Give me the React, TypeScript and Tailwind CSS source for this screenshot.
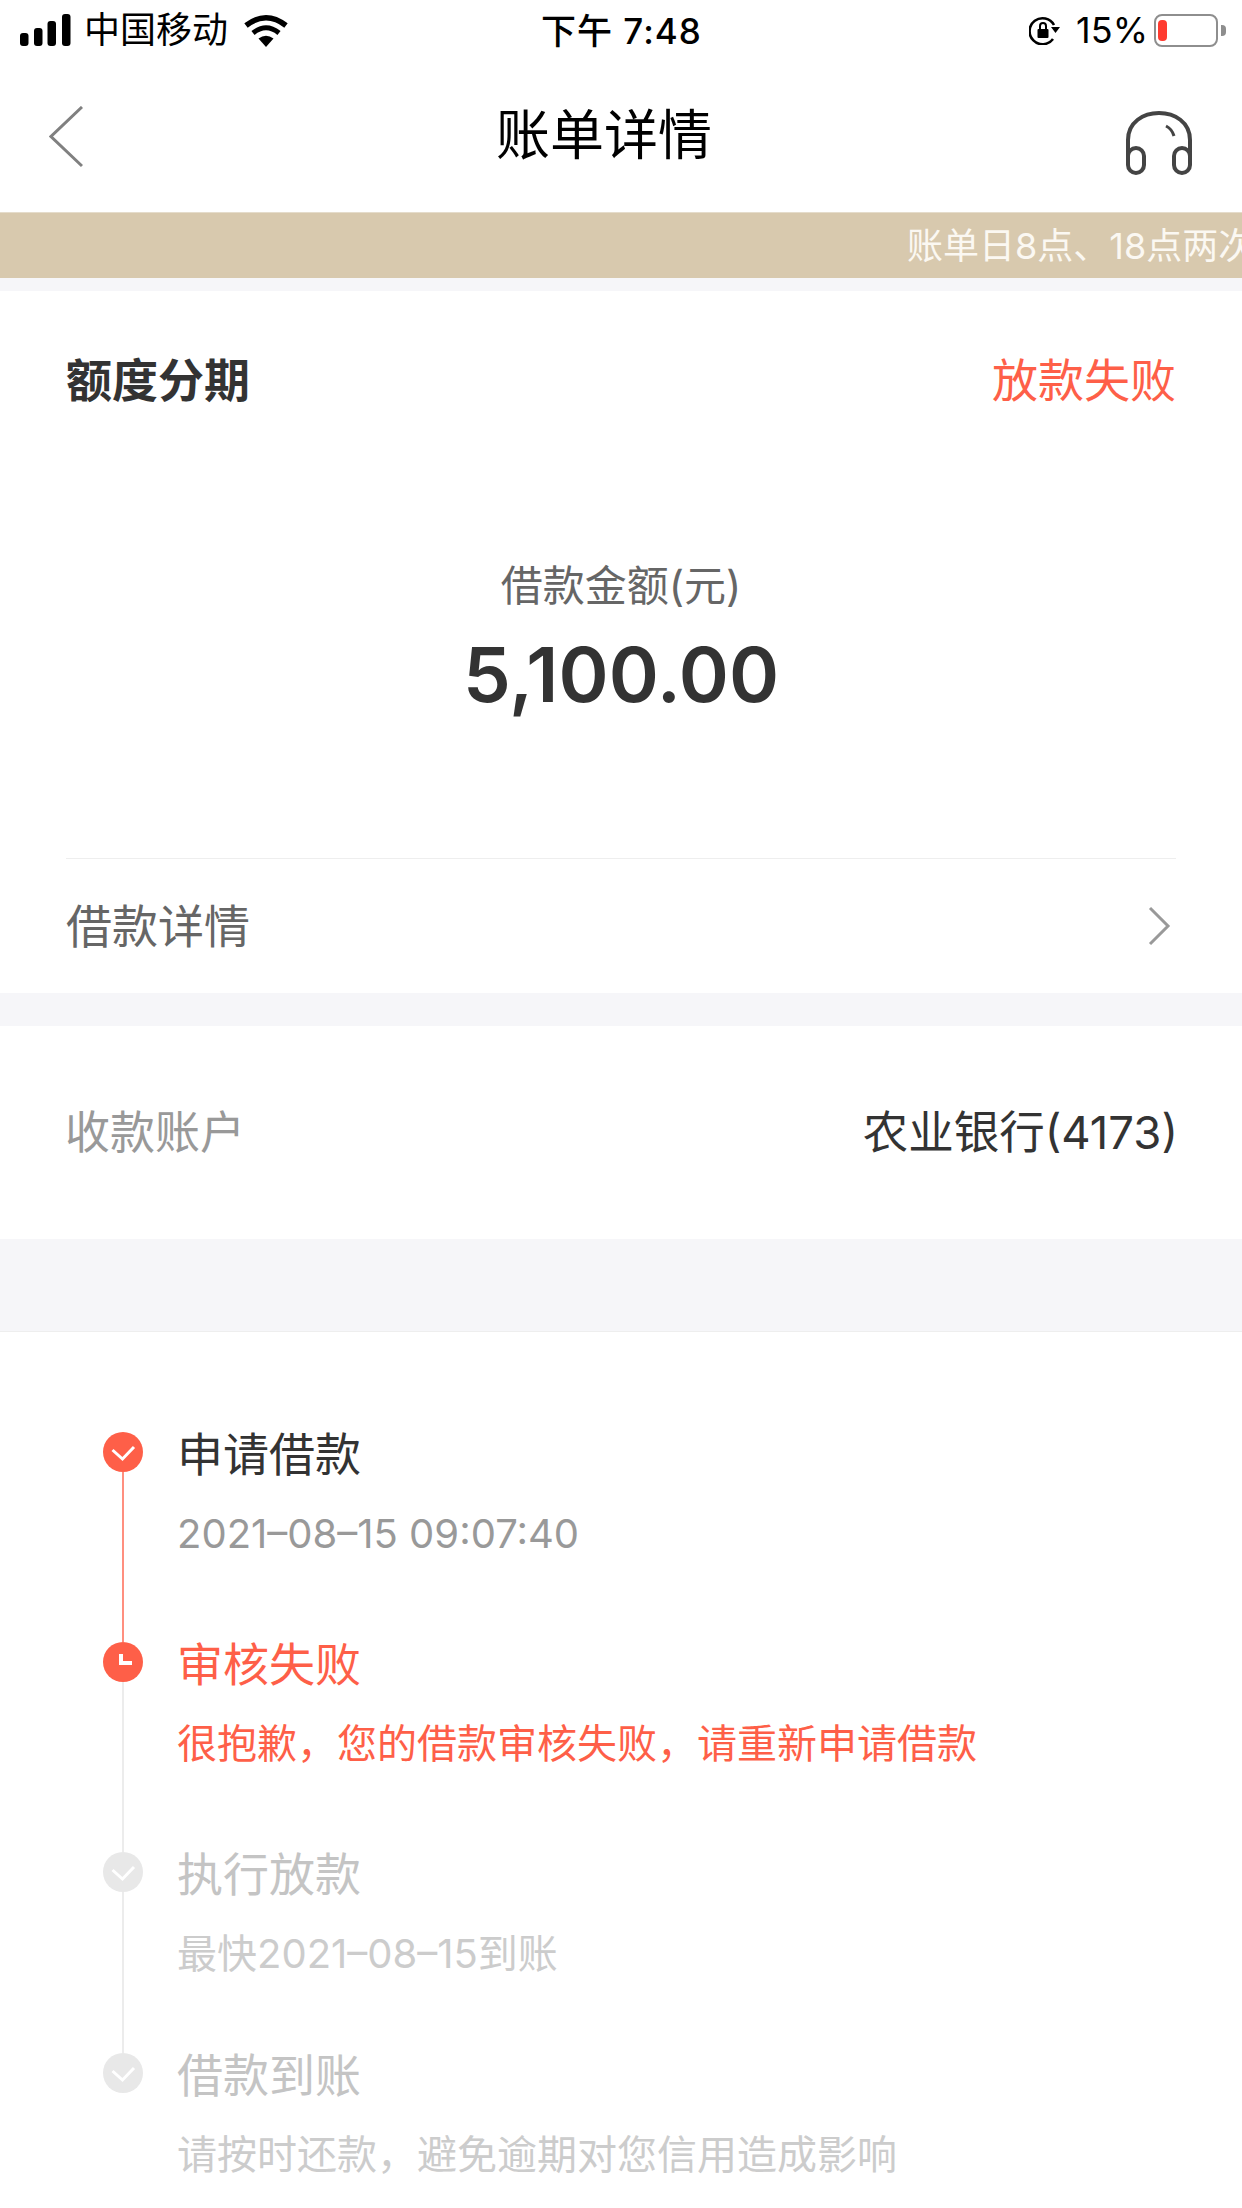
import React from "react";

const font = { fontFamily: '"Inter","Noto Sans CJK SC",sans-serif' };

function Check({ fill, mark }: { fill: string; mark: string }) {
  return (
    <svg width="40" height="40" viewBox="0 0 40 40" className="block shrink-0">
      <circle cx="20" cy="20" r="20" fill={fill} />
      <path d="M9.5 18 L19.5 27 L31 15" fill="none" stroke={mark} strokeWidth="3" />
    </svg>
  );
}

function Clock() {
  return (
    <svg width="40" height="40" viewBox="0 0 40 40" className="block shrink-0">
      <circle cx="20" cy="20" r="20" fill="#fe5f48" />
      <path d="M18 12 V21 H29" fill="none" stroke="#fff" strokeWidth="4" />
    </svg>
  );
}

function Step({
  icon, title, sub, titleCls, subCls, lineCls, h,
}: {
  icon: React.ReactNode; title: string; sub: string; titleCls: string; subCls: string; lineCls?: string; h: string;
}) {
  return (
    <div className={`flex ${h}`}>
      <div className="flex w-[177px] shrink-0 flex-col items-center pl-[103px] pr-[34px]">
        {icon}
        {lineCls && <div className={`w-[2px] grow ${lineCls}`} />}
      </div>
      <div className="flex min-w-0 flex-col">
        <div className={`h-[40px] whitespace-nowrap text-[46px] leading-[45px] ${titleCls}`}>{title}</div>
        <div className={`mt-[41px] whitespace-nowrap text-[40px] leading-[42px] ${subCls}`}>{sub}</div>
      </div>
    </div>
  );
}

export default function App() {
  return (
    <div style={font} className="flex h-[2208px] w-[1242px] flex-col overflow-hidden bg-white">
      {/* status bar */}
      <div className="relative flex h-[60px] shrink-0 items-center justify-between pl-[20px] pr-[16px] text-black">
        <div className="flex items-center">
          <svg width="51" height="32" viewBox="0 0 51 32" className="block">
            <rect x="0" y="19" width="8.5" height="13" rx="3" />
            <rect x="14" y="14" width="8.5" height="18" rx="3" />
            <rect x="27.5" y="7" width="8.5" height="25" rx="3" />
            <rect x="42" y="0" width="8.5" height="32" rx="3" />
          </svg>
          <span className="ml-[13px] text-[36px] leading-[40px]">中国移动</span>
          <svg width="46" height="33" viewBox="0 0 46 33" className="ml-[15px] block">
            <path d="M23 33 L15.5 24.5 Q23 19 30.5 24.5 Z" />
            <path d="M10 19 Q23 8.5 36 19" fill="none" stroke="#000" strokeWidth="5" />
            <path d="M3 11.5 Q23 -4 43 11.5" fill="none" stroke="#000" strokeWidth="5.5" />
          </svg>
        </div>
        <div className="absolute left-[541px] top-[10px] whitespace-nowrap text-[35px] font-medium leading-[42px] tracking-[1px]">下午 7:48</div>
        <div className="flex items-center">
          <svg width="31" height="30" viewBox="0 0 31 30" className="block">
            <path d="M25 10 A13 13 0 1 0 24 24" fill="none" stroke="#000" strokeWidth="2.6" />
            <path d="M22 12 H31 L26.5 18 Z" />
            <rect x="8.5" y="14" width="11" height="9" rx="1" />
            <path d="M11 14 V11 A3 3 0 0 1 17 11 V14" fill="none" stroke="#000" strokeWidth="2" />
          </svg>
          <span className="ml-[16px] text-[36px] leading-[40px]">15%</span>
          <div className="ml-[6px] flex h-[33px] w-[64px] items-center rounded-[8px] border-[2px] border-[#8e8e8e] pl-[2px]">
            <div className="h-[21px] w-[9px] rounded-[4px] bg-[#ff3b30]" />
          </div>
          <div className="ml-[3px] h-[11px] w-[5px] rounded-r-[4px] bg-[#8e8e8e]" />
        </div>
      </div>
      {/* nav */}
      <div className="relative flex h-[152px] shrink-0 items-center justify-center">
        <svg width="34" height="62" viewBox="0 0 34 62" className="absolute left-[49px] top-[46px] block">
          <path d="M33 1 L2 30.5 L33 60" fill="none" stroke="#808080" strokeWidth="3" />
        </svg>
        <div className="-mt-[1px] ml-[-34px] text-[54px] leading-[60px] text-black">账单详情</div>
        <svg width="68" height="66" viewBox="0 0 68 66" className="absolute left-[1125px] top-[50px] block">
          <path d="M3 48 V30 C3 -6 65 -6 65 30 V48" fill="none" stroke="#444" strokeWidth="4" />
          <rect x="3" y="38" width="16" height="25" rx="8" fill="none" stroke="#444" strokeWidth="4" />
          <rect x="49" y="38" width="16" height="25" rx="8" fill="none" stroke="#444" strokeWidth="4" />
          <path d="M41 16 Q47 19 49 26" fill="none" stroke="#444" strokeWidth="3" />
        </svg>
      </div>
      {/* banner */}
      <div className="flex h-[66px] shrink-0 items-center justify-start overflow-hidden border-t border-[#e5dccb] bg-[#d8c9ae] pl-[907px]">
        <span className="whitespace-nowrap text-[36px] leading-[40px] text-[#fbf8f2]">账单日8点、18点两次</span>
      </div>
      <div className="h-[13px] shrink-0 bg-[#f6f6f9]" />
      {/* card */}
      <div className="flex h-[702px] shrink-0 flex-col px-[66px]">
        <div className="flex items-center justify-between pt-[64px]">
          <span className="text-[46px] font-bold leading-[50px] text-[#333]">额度分期</span>
          <span className="text-[46px] leading-[50px] text-[#fe5f48]">放款失败</span>
        </div>
        <div className="mt-[156px] flex flex-col items-center">
          <span className="text-[42px] leading-[50px] text-[#666]">借款金额(元)</span>
          <span className="mt-[18px] text-[76px] font-semibold leading-[90px] text-[#333]">5,100.00</span>
        </div>
        <div className="mt-[139px] h-px shrink-0 bg-[#eeeeee]" />
        <div className="flex grow items-center justify-between">
          <span className="text-[46px] leading-[50px] text-[#666]">借款详情</span>
          <svg width="24" height="40" viewBox="0 0 24 40" className="mr-[5px] block">
            <path d="M3 2 L21 20 L3 38" fill="none" stroke="#999" strokeWidth="3" />
          </svg>
        </div>
      </div>
      <div className="h-[33px] shrink-0 bg-[#f6f6f9]" />
      {/* account */}
      <div className="flex h-[213px] shrink-0 items-center justify-between pl-[65px] pr-[64px]">
        <span className="text-[45px] leading-[50px] text-[#999]">收款账户</span>
        <span className="text-[45.5px] leading-[50px] text-[#333]">农业银行(4173)</span>
      </div>
      <div className="h-[93px] shrink-0 border-b border-[#eeeeee] bg-[#f6f6f9]" />
      {/* timeline */}
      <div className="flex grow flex-col pt-[100px]">
        <Step
          h="h-[210px]"
          icon={<Check fill="#fe5f48" mark="#fff" />}
          title="申请借款"
          titleCls="text-[#333]"
          sub="2021–08–15 09:07:40"
          subCls="text-[#999]"
          lineCls="bg-[#ff8f7f]"
        />
        <Step
          h="h-[210px]"
          icon={<Clock />}
          title="审核失败"
          titleCls="text-[#fe5f48]"
          sub="很抱歉，您的借款审核失败，请重新申请借款"
          subCls="text-[#fe5f48]"
          lineCls="bg-[#ececec]"
        />
        <Step
          h="h-[201px]"
          icon={<Check fill="#e8e8e8" mark="#fff" />}
          title="执行放款"
          titleCls="text-[#c4c4c4]"
          sub="最快2021–08–15到账"
          subCls="text-[#cccccc]"
          lineCls="bg-[#ececec]"
        />
        <Step
          h="h-[140px]"
          icon={<Check fill="#e8e8e8" mark="#fff" />}
          title="借款到账"
          titleCls="text-[#c4c4c4]"
          sub="请按时还款，避免逾期对您信用造成影响"
          subCls="text-[#cccccc]"
        />
      </div>
    </div>
  );
}
